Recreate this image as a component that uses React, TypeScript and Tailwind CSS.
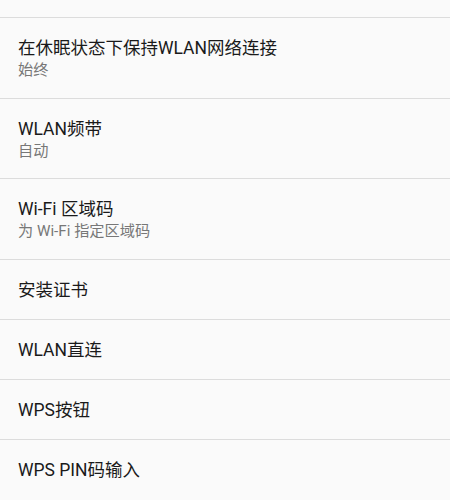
import React from "react";

type Item = { title: string; subtitle?: string; h: string };

const items: Item[] = [
  { title: "在休眠状态下保持WLAN网络连接", subtitle: "始终", h: "h-[81px]" },
  { title: "WLAN频带", subtitle: "自动", h: "h-[80px]" },
  { title: "Wi-Fi 区域码", subtitle: "为 Wi-Fi 指定区域码", h: "h-[81px]" },
  { title: "安装证书", h: "h-[60px]" },
  { title: "WLAN直连", h: "h-[60px]" },
  { title: "WPS按钮", h: "h-[60px]" },
  { title: "WPS PIN码输入", h: "h-[60px]" },
];

export default function App() {
  return (
    <div
      className="w-[450px] h-[500px] overflow-hidden bg-[#fafafa]"
      style={{ fontFamily: 'Roboto, "Noto Sans CJK SC", sans-serif' }}
    >
      <div className="h-[17px]" />
      {items.map((it) => (
        <div
          key={it.title}
          className={`${it.h} border-t border-[#dcdcdc] pl-[18px] pt-[18px] flex flex-col`}
        >
          <div className="text-[17.5px] leading-[24px] text-[#1a1a1a]">{it.title}</div>
          {it.subtitle && (
            <div className="text-[15.2px] leading-[21px] text-[#777777]">{it.subtitle}</div>
          )}
        </div>
      ))}
    </div>
  );
}
